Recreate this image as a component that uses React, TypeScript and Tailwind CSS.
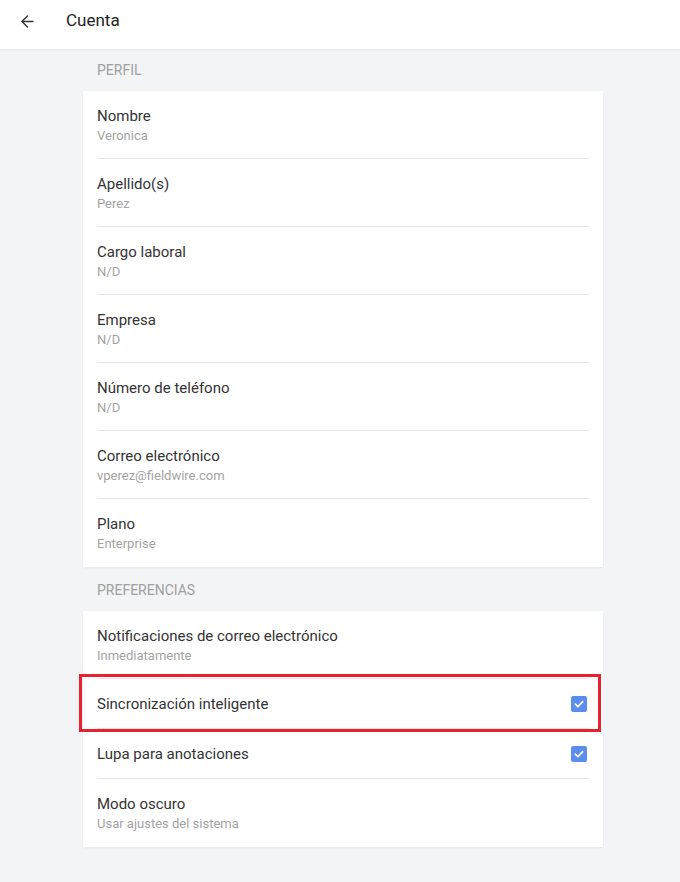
import { ArrowLeft } from 'lucide-react';

const PROFILE = [
  { title: 'Nombre', value: 'Veronica' },
  { title: 'Apellido(s)', value: 'Perez' },
  { title: 'Cargo laboral', value: 'N/D' },
  { title: 'Empresa', value: 'N/D' },
  { title: 'Número de teléfono', value: 'N/D' },
  { title: 'Correo electrónico', value: 'vperez@fieldwire.com' },
  { title: 'Plano', value: 'Enterprise' },
];

function Row({ title, value, last }: { title: string; value: string; last?: boolean }) {
  return (
    <div className="h-[68px] px-[14px]">
      <div className={`h-full pt-[15px] ${last ? '' : 'border-b border-[#e6e6e6]'}`}>
        <div className="text-[15px] leading-[21px] text-[#333333]">{title}</div>
        <div className="text-[13px] leading-[18px] text-[#a3a3a3]">{value}</div>
      </div>
    </div>
  );
}

function Check() {
  return (
    <div className="w-4 h-4 rounded-[2px] bg-[#5b8def] flex items-center justify-center">
      <svg width="12" height="12" viewBox="0 0 12 12" fill="none">
        <path d="M2.3 6.2 L4.9 8.6 L9.7 3.6" stroke="white" strokeWidth="1.7" strokeLinecap="round" strokeLinejoin="round" />
      </svg>
    </div>
  );
}

function ToggleRow({ title, last }: { title: string; last?: boolean }) {
  return (
    <div className="px-[14px]">
      <div className={`h-[50px] flex items-center justify-between pr-[2px] pt-[1px] ${last ? '' : 'border-b border-[#e6e6e6]'}`}>
        <span className="text-[15px] text-[#333333]">{title}</span>
        <Check />
      </div>
    </div>
  );
}

function SectionLabel({ children, tall }: { children: string; tall?: boolean }) {
  return (
    <div className={`${tall ? 'h-[44px] pt-[2px]' : 'h-[42px]'} flex items-center px-[14px] text-[14px] uppercase text-[#a0a0a0]`}>
      {children}
    </div>
  );
}

export default function App() {
  return (
    <div className="w-[680px] h-[882px] bg-[#f3f4f6] font-['Roboto',sans-serif] overflow-hidden">
      <header className="h-[49px] pb-[7px] bg-white flex items-center shadow-[0_1px_3px_rgba(0,0,0,0.06)] relative z-10">
        <ArrowLeft className="ml-[18px] w-[19px] h-[19px] text-[#333333]" strokeWidth={1.8} />
        <h1 className="ml-[29px] text-[17px] text-[#222222]">Cuenta</h1>
      </header>

      <div className="w-[520px] ml-[83px]">
        <SectionLabel>Perfil</SectionLabel>
        <div className="bg-white shadow-[0_1px_2px_rgba(0,0,0,0.05)]">
          {PROFILE.map((p, i) => (
            <Row key={p.title} title={p.title} value={p.value} last={i === PROFILE.length - 1} />
          ))}
        </div>

        <SectionLabel tall>Preferencias</SectionLabel>
        <div className="bg-white shadow-[0_1px_2px_rgba(0,0,0,0.05)]">
          <Row title="Notificaciones de correo electrónico" value="Inmediatamente" />
          <div className="relative">
            <ToggleRow title="Sincronización inteligente" />
            <div className="absolute left-[-4px] top-[-5px] w-[522px] h-[58px] border-[3px] border-[#e8202f] pointer-events-none" />
          </div>
          <ToggleRow title="Lupa para anotaciones" />
          <Row title="Modo oscuro" value="Usar ajustes del sistema" last />
        </div>
      </div>
    </div>
  );
}
